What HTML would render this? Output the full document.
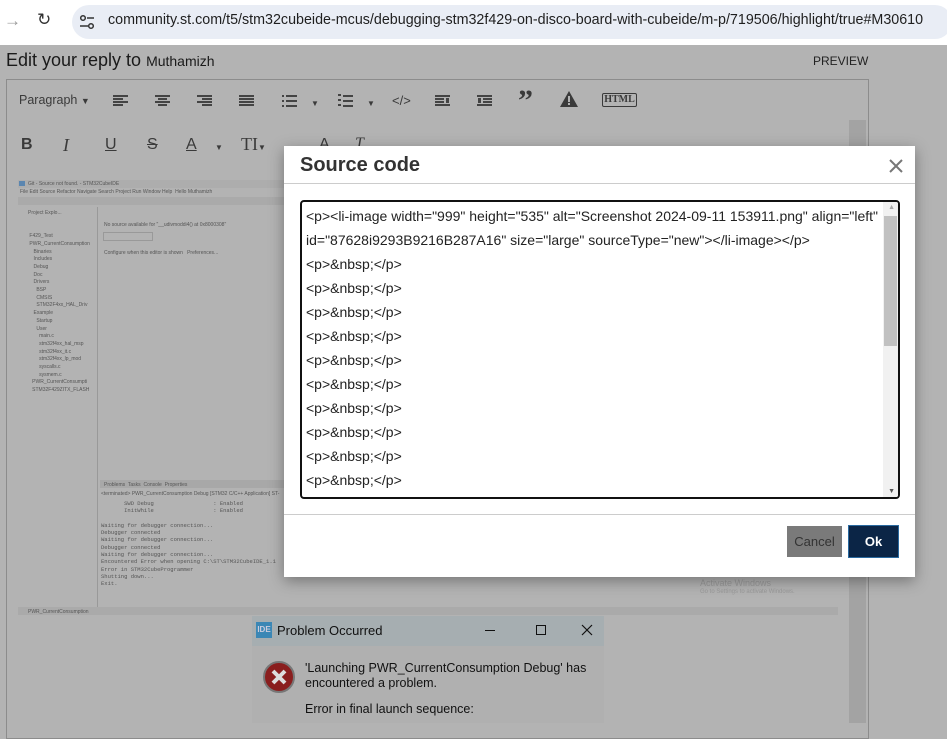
<!DOCTYPE html>
<html><head><meta charset="utf-8"><style>
*{box-sizing:border-box;margin:0;padding:0}
body{width:947px;height:723px;overflow:hidden;background:#b3b3b3;font-family:"Liberation Sans",sans-serif;position:relative;color:#1a1a1a}
.abs{position:absolute}
.chrome{left:0;top:0;width:947px;height:45px;background:#fff}
.pill{left:72px;top:5px;width:880px;height:34px;border-radius:17px;background:#e9edf5}
.url{left:108px;top:12px;font-size:14.3px;color:#1f1f1f;white-space:nowrap}
.t{position:absolute;color:#3a3a3a;font-size:16px;line-height:16px}
.al{position:absolute;width:15px;height:11px}
.al i{position:absolute;height:2px;background:#444;display:block}
.txt{font-size:5px;color:#555;white-space:nowrap}
.modal{left:284px;top:146px;width:631px;height:431px;background:#fff;box-shadow:0 4px 14px rgba(0,0,0,.35)}
.code{font-size:14px;color:#222;line-height:24px;white-space:nowrap}
</style></head><body>
<div class="abs chrome"></div>
<div class="abs" style="left:4px;top:11px;font-size:17px;color:#999">→</div>
<div class="abs" style="left:37px;top:10px;font-size:17px;color:#333">↻</div>
<div class="abs pill"></div>
<svg class="abs" style="left:79px;top:14px" width="16" height="16"><circle cx="4" cy="4" r="2.3" fill="none" stroke="#333" stroke-width="1.5"/><line x1="8" y1="4" x2="15" y2="4" stroke="#333" stroke-width="1.5"/><circle cx="12" cy="12" r="2.3" fill="none" stroke="#333" stroke-width="1.5"/><line x1="1" y1="12" x2="9" y2="12" stroke="#333" stroke-width="1.5"/></svg>
<div class="abs url">community.st.com/t5/stm32cubeide-mcus/debugging-stm32f429-on-disco-board-with-cubeide/m-p/719506/highlight/true#M30610</div>

<div class="abs" style="left:6px;top:50px;font-size:18px;color:#1a1a1a">Edit your reply to <span style="font-size:14px">Muthamizh</span></div>
<div class="abs" style="left:813px;top:54px;font-size:12px;color:#222">PREVIEW</div>
<div class="abs" style="left:6px;top:79px;width:863px;height:660px;border:1px solid #8c8c8c"></div>
<div class="abs" style="left:849px;top:120px;width:17px;height:603px;background:#a3a3a3"></div>

<!-- toolbar row 1 -->
<div class="t" style="left:19px;top:92px;font-size:12.5px">Paragraph <span style="font-size:9px">▼</span></div>
<div class="al" style="left:113px;top:95px"><i style="left:0;top:0;width:15px"></i><i style="left:0;top:3px;width:10px"></i><i style="left:0;top:6px;width:15px"></i><i style="left:0;top:9px;width:10px"></i></div>
<div class="al" style="left:155px;top:95px"><i style="left:0;top:0;width:15px"></i><i style="left:3px;top:3px;width:9px"></i><i style="left:0;top:6px;width:15px"></i><i style="left:3px;top:9px;width:9px"></i></div>
<div class="al" style="left:197px;top:95px"><i style="left:0;top:0;width:15px"></i><i style="left:5px;top:3px;width:10px"></i><i style="left:0;top:6px;width:15px"></i><i style="left:5px;top:9px;width:10px"></i></div>
<div class="al" style="left:239px;top:95px"><i style="left:0;top:0;width:15px"></i><i style="left:0;top:3px;width:15px"></i><i style="left:0;top:6px;width:15px"></i><i style="left:0;top:9px;width:15px"></i></div>
<div class="al" style="left:282px;top:95px"><i style="left:0;top:0;width:2px"></i><i style="left:4px;top:0;width:11px"></i><i style="left:0;top:5px;width:2px"></i><i style="left:4px;top:5px;width:11px"></i><i style="left:0;top:10px;width:2px"></i><i style="left:4px;top:10px;width:11px"></i></div>
<div class="t" style="left:311px;top:96px;font-size:8px">▼</div>
<div class="al" style="left:338px;top:94px"><i style="left:0;top:0;width:3px"></i><i style="left:5px;top:1px;width:10px"></i><i style="left:0;top:5px;width:3px"></i><i style="left:5px;top:6px;width:10px"></i><i style="left:0;top:10px;width:3px"></i><i style="left:5px;top:11px;width:10px"></i></div>
<div class="t" style="left:367px;top:96px;font-size:8px">▼</div>
<div class="t" style="left:392px;top:93px;font-size:13px">&lt;/&gt;</div>
<div class="al" style="left:435px;top:95px"><i style="left:0;top:0;width:15px"></i><i style="left:0;top:3px;width:9px"></i><i style="left:0;top:6px;width:9px"></i><i style="left:0;top:9px;width:15px"></i><i style="left:11px;top:3px;width:3px;height:5px"></i></div>
<div class="al" style="left:477px;top:95px"><i style="left:0;top:0;width:15px"></i><i style="left:6px;top:3px;width:9px"></i><i style="left:6px;top:6px;width:9px"></i><i style="left:0;top:9px;width:15px"></i><i style="left:1px;top:3px;width:3px;height:5px"></i></div>
<div class="t" style="left:518px;top:86px;font-size:30px;font-weight:bold;font-family:'Liberation Serif',serif;line-height:30px">”</div>
<svg class="abs" style="left:560px;top:91px" width="18" height="16"><path d="M9 0L18 16H0Z" fill="#3a3a3a"/><rect x="8" y="5" width="2" height="6" fill="#b3b3b3"/><rect x="8" y="12" width="2" height="2" fill="#b3b3b3"/></svg>
<div class="abs" style="left:602px;top:93px;width:35px;height:14px;border:1px solid #3a3a3a;border-radius:2px;font-family:'Liberation Serif',serif;font-size:10px;text-align:center;line-height:12px;color:#3a3a3a;font-weight:bold">HTML</div>

<!-- toolbar row 2 -->
<div class="t" style="left:21px;top:137px;font-weight:bold">B</div>
<div class="t" style="left:63px;top:137px;font-family:'Liberation Serif',serif;font-style:italic;font-size:18px">I</div>
<div class="t" style="left:105px;top:137px;text-decoration:underline">U</div>
<div class="t" style="left:147px;top:137px;text-decoration:line-through">S</div>
<div class="t" style="left:186px;top:137px;text-decoration:underline">A</div>
<div class="t" style="left:215px;top:140px;font-size:8px">▼</div>
<div class="t" style="left:241px;top:136px;font-family:'Liberation Serif',serif;font-size:18px">TI<span style="font-size:8px">▼</span></div>
<div class="t" style="left:319px;top:137px">A</div>
<div class="t" style="left:355px;top:136px;font-family:'Liberation Serif',serif;font-style:italic">T</div>

<!-- embedded IDE screenshot -->
<div class="abs" style="left:18px;top:180px;width:820px;height:8px;background:#adadad"></div>
<div class="abs" style="left:19px;top:181px;width:6px;height:5px;background:#5b86b0"></div>
<div class="abs txt" style="left:28px;top:181px">Git - Source not found. - STM32CubeIDE</div>
<div class="abs txt" style="left:20px;top:189px">File Edit Source Refactor Navigate Search Project Run Window Help &nbsp;Hello Muthamizh</div>
<div class="abs" style="left:18px;top:197px;width:820px;height:8px;background:#aaaaaa"></div>
<div class="abs" style="left:18px;top:207px;width:80px;height:400px;border-right:1px solid #999"></div>
<div class="abs txt" style="left:28px;top:210px;line-height:7.7px;white-space:pre">Project Explo...


 F429_Test
 PWR_CurrentConsumption
    Binaries
    Includes
    Debug
    Doc
    Drivers
      BSP
      CMSIS
      STM32F4xx_HAL_Driv
    Example
      Startup
      User
        main.c
        stm32f4xx_hal_msp
        stm32f4xx_it.c
        stm32f4xx_lp_mod
        syscalls.c
        sysmem.c
   PWR_CurrentConsumpti
   STM32F429ZITX_FLASH</div>
<div class="abs txt" style="left:104px;top:222px">No source available for "__udivmoddi4() at 0x8000308"</div>
<div class="abs" style="left:103px;top:232px;width:50px;height:9px;border:1px solid #999"></div>
<div class="abs txt" style="left:104px;top:250px">Configure when this editor is shown &nbsp;&nbsp;Preferences...</div>
<div class="abs" style="left:100px;top:480px;width:740px;height:8px;background:#a8a8a8"></div>
<div class="abs txt" style="left:104px;top:482px">Problems &nbsp;Tasks &nbsp;Console &nbsp;Properties</div>
<div class="abs txt" style="left:101px;top:491px">&lt;terminated&gt; PWR_CurrentConsumption Debug [STM32 C/C++ Application] ST-</div>
<div class="abs" style="left:101px;top:500px;font-family:'Liberation Mono',monospace;font-size:5.5px;color:#555;line-height:7.3px;white-space:pre">       SWD Debug                  : Enabled
       InitWhile                  : Enabled

Waiting for debugger connection...
Debugger connected
Waiting for debugger connection...
Debugger connected
Waiting for debugger connection...
Encountered Error when opening C:\ST\STM32CubeIDE_1.1
Error in STM32CubeProgrammer
Shutting down...
Exit.</div>
<div class="abs" style="left:18px;top:607px;width:820px;height:8px;background:#aaa"></div>
<div class="abs txt" style="left:28px;top:609px">PWR_CurrentConsumption</div>
<div class="abs" style="left:700px;top:578px;font-size:9px;color:#999">Activate Windows</div>
<div class="abs" style="left:700px;top:589px;font-size:6px;color:#999">Go to Settings to activate Windows.</div>

<!-- problem dialog -->
<div class="abs" style="left:252px;top:616px;width:352px;height:107px;background:#b0b0b0"></div>
<div class="abs" style="left:252px;top:616px;width:352px;height:30px;background:#a6aeb1"></div>
<div class="abs" style="left:256px;top:622px;width:16px;height:16px;background:#3b87b5;color:#ccd;font-size:8px;font-weight:bold;text-align:center;line-height:16px">IDE</div>
<div class="abs" style="left:277px;top:623px;font-size:13px;color:#111">Problem Occurred</div>
<div class="abs" style="left:485px;top:630px;width:10px;height:1px;background:#111"></div>
<div class="abs" style="left:536px;top:625px;width:10px;height:10px;border:1px solid #111"></div>
<svg class="abs" style="left:581px;top:624px" width="12" height="12"><path d="M1 1L11 11M11 1L1 11" stroke="#111" stroke-width="1.2"/></svg>
<svg class="abs" style="left:262px;top:660px" width="34" height="34"><circle cx="17" cy="17" r="15" fill="#8a1e1e" stroke="#777" stroke-width="2"/><path d="M11 11L23 23M23 11L11 23" stroke="#ddd" stroke-width="4"/></svg>
<div class="abs" style="left:305px;top:661px;font-size:12.5px;color:#111;line-height:15px">'Launching PWR_CurrentConsumption Debug' has<br>encountered a problem.</div>
<div class="abs" style="left:305px;top:702px;font-size:12.5px;color:#111">Error in final launch sequence:</div>

<!-- modal -->
<div class="abs modal">
  <div class="abs" style="left:16px;top:8px;font-size:20px;font-weight:bold;color:#333">Source code</div>
  <svg class="abs" style="left:605px;top:13px" width="14" height="14"><path d="M1 1L13 13M13 1L1 13" stroke="#777" stroke-width="2"/></svg>
  <div class="abs" style="left:0;top:37px;width:631px;height:1px;background:#ccc"></div>
  <div class="abs" style="left:16px;top:54px;width:600px;height:299px;border:2px solid #111;border-radius:4px;overflow:hidden">
    <div class="abs code" style="left:4px;top:2px">&lt;p&gt;&lt;li-image width="999" height="535" alt="Screenshot 2024-09-11 153911.png" align="left"<br>id="87628i9293B9216B287A16" size="large" sourceType="new"&gt;&lt;/li-image&gt;&lt;/p&gt;<br>&lt;p&gt;&amp;nbsp;&lt;/p&gt;<br>&lt;p&gt;&amp;nbsp;&lt;/p&gt;<br>&lt;p&gt;&amp;nbsp;&lt;/p&gt;<br>&lt;p&gt;&amp;nbsp;&lt;/p&gt;<br>&lt;p&gt;&amp;nbsp;&lt;/p&gt;<br>&lt;p&gt;&amp;nbsp;&lt;/p&gt;<br>&lt;p&gt;&amp;nbsp;&lt;/p&gt;<br>&lt;p&gt;&amp;nbsp;&lt;/p&gt;<br>&lt;p&gt;&amp;nbsp;&lt;/p&gt;<br>&lt;p&gt;&amp;nbsp;&lt;/p&gt;</div>
    <div class="abs" style="right:0;top:0;width:15px;height:295px;background:#f1f1f1"></div>
    <div class="abs" style="right:1px;top:14px;width:13px;height:130px;background:#c1c1c1"></div>
    <div class="abs" style="right:3px;top:2px;font-size:7px;color:#aaa">▲</div>
    <div class="abs" style="right:3px;bottom:2px;font-size:7px;color:#555">▼</div>
  </div>
  <div class="abs" style="left:0;top:368px;width:631px;height:1px;background:#ccc"></div>
  <div class="abs" style="left:503px;top:380px;width:55px;height:31px;background:#7a7a7a;color:#333;font-size:13px;text-align:center;line-height:31px">Cancel</div>
  <div class="abs" style="left:564px;top:379px;width:51px;height:33px;background:#0b2546;border:1px solid #2a6aa0;color:#fff;font-size:13px;font-weight:bold;text-align:center;line-height:31px">Ok</div>
</div>
</body></html>
